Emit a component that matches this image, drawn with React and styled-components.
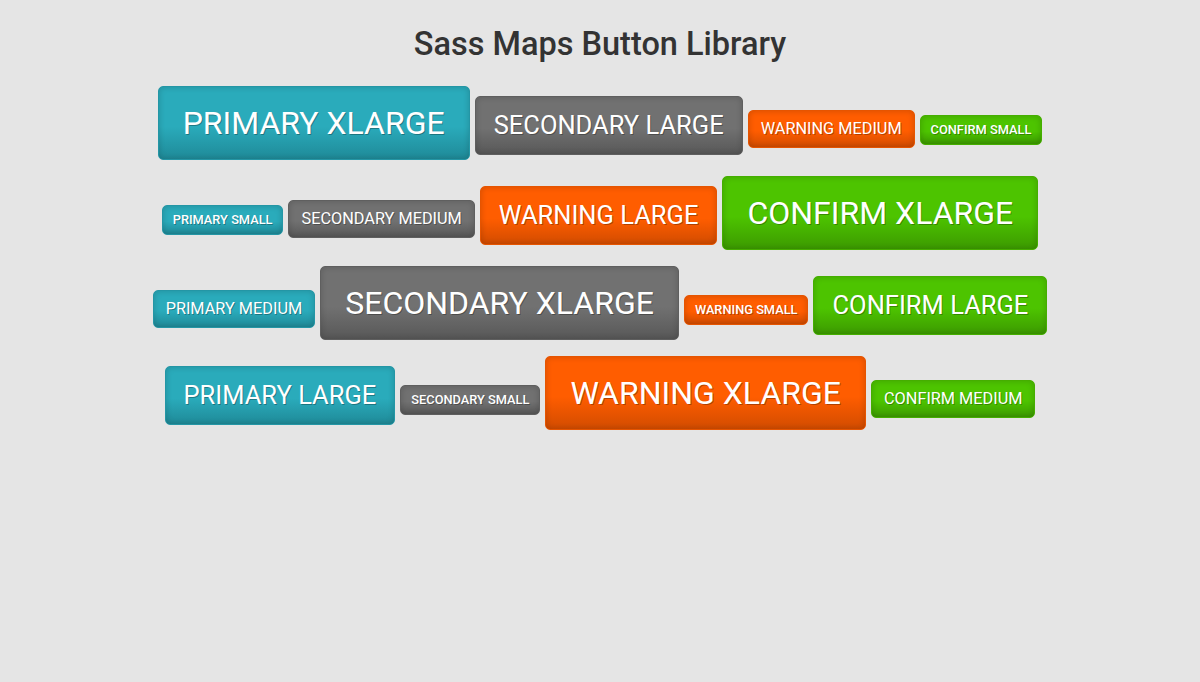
import React from "react";
import styled, { createGlobalStyle, css } from "styled-components";

const GlobalStyle = createGlobalStyle`
  body {
    margin: 0;
    padding: 0;
    background: #e5e5e5;
    font-family: Roboto, "Noto Sans", sans-serif;
  }
`;

const palette = {
  primary: { bg: "#2aabbb", dark: "#1f8a98", border: "#2496a5" },
  secondary: { bg: "#717171", dark: "#585858", border: "#5f5f5f" },
  warning: { bg: "#ff5d00", dark: "#d24c00", border: "#e65400" },
  confirm: { bg: "#4dc400", dark: "#3c9a00", border: "#45ae00" },
};

const sizes = {
  small: { font: 12.8, weight: 500, height: 30, pad: 10 },
  medium: { font: 16.3, weight: 400, height: 38, pad: 12 },
  large: { font: 25.5, weight: 400, height: 59, pad: 18 },
  xlarge: { font: 32, weight: 400, height: 74, pad: 24 },
};

const Page = styled.div`
  padding-top: 24px;
  display: flex;
  flex-direction: column;
  align-items: center;
`;

const Title = styled.h1`
  margin: 0 0 22px;
  font-size: 32.5px;
  font-weight: 500;
  line-height: 40px;
  color: #333;
`;

const Rows = styled.div`
  display: flex;
  flex-direction: column;
  gap: 16px;
`;

const Row = styled.div`
  display: flex;
  justify-content: center;
  align-items: baseline;
  gap: 5px;
`;

const Button = styled.button`
  ${({ $kind, $size }) => {
    const c = palette[$kind];
    const s = sizes[$size];
    return css`
      background: linear-gradient(to bottom, ${c.bg} 55%, ${c.dark} 100%);
      border: 1px solid ${c.border};
      font-size: ${s.font}px;
      font-weight: ${s.weight};
      height: ${s.height}px;
      line-height: ${s.height - 2}px;
      padding: 0 ${s.pad}px;
    `;
  }}
  box-shadow: inset 0 0 6px rgba(0, 0, 0, 0.18);
  font-family: Roboto, "Noto Sans", sans-serif;
  color: #fff;
  text-transform: uppercase;
  text-shadow: 1px 1px 0 rgba(0, 0, 0, 0.28);
  border-radius: 5px;
  white-space: nowrap;
  cursor: pointer;
`;

const rows = [
  [
    ["primary", "xlarge"],
    ["secondary", "large"],
    ["warning", "medium"],
    ["confirm", "small"],
  ],
  [
    ["primary", "small"],
    ["secondary", "medium"],
    ["warning", "large"],
    ["confirm", "xlarge"],
  ],
  [
    ["primary", "medium"],
    ["secondary", "xlarge"],
    ["warning", "small"],
    ["confirm", "large"],
  ],
  [
    ["primary", "large"],
    ["secondary", "small"],
    ["warning", "xlarge"],
    ["confirm", "medium"],
  ],
];

export default function App() {
  return (
    <>
      <GlobalStyle />
      <Page>
        <Title>Sass Maps Button Library</Title>
        <Rows>
          {rows.map((row, i) => (
            <Row key={i}>
              {row.map(([kind, size]) => (
                <Button key={kind + size} $kind={kind} $size={size}>
                  {kind} {size}
                </Button>
              ))}
            </Row>
          ))}
        </Rows>
      </Page>
    </>
  );
}
